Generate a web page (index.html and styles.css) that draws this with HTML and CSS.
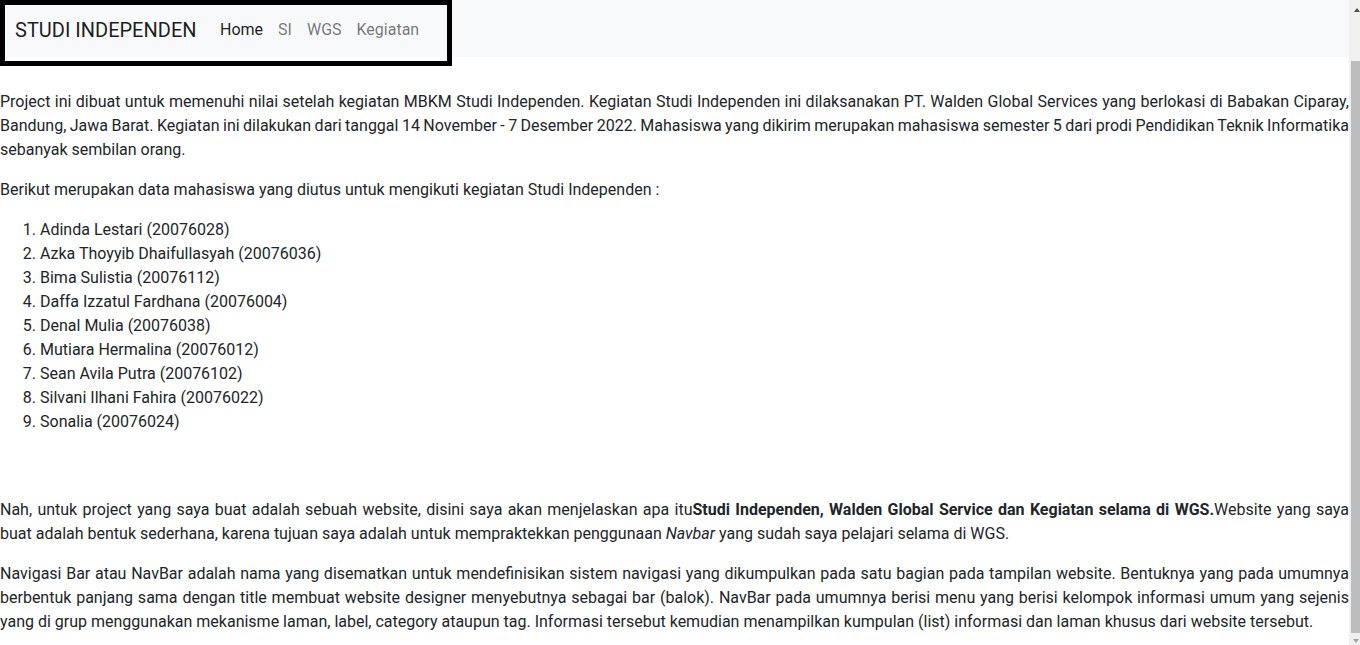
FILE: index.html
```html
<!DOCTYPE html>
<html lang="id">
<head>
<meta charset="utf-8">
<title>Studi Independen</title>
<link rel="stylesheet" href="styles.css">
</head>
<body>
<div class="app">
  <div class="screen">
    <nav class="navbar">
      <div class="navbox">
        <a class="brand" href="#">STUDI INDEPENDEN</a>
        <ul class="nav">
          <li><a class="nav-link active" href="#">Home</a></li>
          <li><a class="nav-link" href="#">SI</a></li>
          <li><a class="nav-link" href="#">WGS</a></li>
          <li><a class="nav-link" href="#">Kegiatan</a></li>
        </ul>
      </div>
    </nav>
    <main class="main">
      <p>
        <span class="ln">Project ini dibuat untuk memenuhi nilai setelah kegiatan MBKM Studi Independen. Kegiatan Studi Independen ini dilaksanakan PT. Walden Global Services yang berlokasi di Babakan Ciparay,</span>
        <span class="ln">Bandung, Jawa Barat. Kegiatan ini dilakukan dari tanggal 14 November - 7 Desember 2022. Mahasiswa yang dikirim merupakan mahasiswa semester 5 dari prodi Pendidikan Teknik Informatika</span>
        <span class="ln ln-last">sebanyak sembilan orang.</span>
      </p>
      <p>Berikut merupakan data mahasiswa yang diutus untuk mengikuti kegiatan Studi Independen :</p>
      <ol class="students">
        <li>Adinda Lestari (20076028)</li>
        <li>Azka Thoyyib Dhaifullasyah (20076036)</li>
        <li>Bima Sulistia (20076112)</li>
        <li>Daffa Izzatul Fardhana (20076004)</li>
        <li>Denal Mulia (20076038)</li>
        <li>Mutiara Hermalina (20076012)</li>
        <li>Sean Avila Putra (20076102)</li>
        <li>Silvani Ilhani Fahira (20076022)</li>
        <li>Sonalia (20076024)</li>
      </ol>
      <div class="spacer"></div>
      <p>
        <span class="ln">Nah, untuk project yang saya buat adalah sebuah website, disini saya akan menjelaskan apa itu<b>Studi Independen, Walden Global Service dan Kegiatan selama di WGS.</b>Website yang saya</span>
        <span class="ln ln-last">buat adalah bentuk sederhana, karena tujuan saya adalah untuk mempraktekkan penggunaan <i>Navbar</i> yang sudah saya pelajari selama di WGS.</span>
      </p>
      <p>
        <span class="ln">Navigasi Bar atau NavBar adalah nama yang disematkan untuk mendefinisikan sistem navigasi yang dikumpulkan pada satu bagian pada tampilan website. Bentuknya yang pada umumnya</span>
        <span class="ln">berbentuk panjang sama dengan title membuat website designer menyebutnya sebagai bar (balok). NavBar pada umumnya berisi menu yang berisi kelompok informasi umum yang sejenis</span>
        <span class="ln ln-last">yang di grup menggunakan mekanisme laman, label, category ataupun tag. Informasi tersebut kemudian menampilkan kumpulan (list) informasi dan laman khusus dari website tersebut.</span>
      </p>
    </main>
  </div>
  <div class="scrollbar" aria-hidden="true">
    <div class="sb-btn sb-up"><span class="arrow-up"></span></div>
    <div class="sb-track"><div class="sb-thumb"></div></div>
    <div class="sb-btn sb-down"><span class="arrow-down"></span></div>
  </div>
</div>
</body>
</html>
```
FILE: styles.css
```css
html, body {
  margin: 0;
  height: 100%;
  overflow: hidden;
}

body {
  font-family: Roboto, "Noto Sans", sans-serif;
  font-size: 16px;
  line-height: 24px;
  color: #212529;
  background: #fff;
}

.app {
  display: flex;
  height: 100vh;
}

.screen {
  flex: 1;
  min-width: 0;
  overflow: hidden;
}

/* scrollbar (partially visible at the right edge) */
.scrollbar {
  flex: none;
  width: 11px;
  display: flex;
  flex-direction: column;
  background: #f0f0f0;
  overflow: hidden;
}

.sb-btn {
  flex: none;
  display: flex;
  padding-left: 5px;
}

.sb-up {
  height: 17px;
  align-items: flex-start;
  padding-top: 8px;
  box-sizing: border-box;
}

.sb-down {
  height: 12px;
  align-items: flex-start;
  padding-top: 6px;
  padding-left: 4px;
  box-sizing: border-box;
}

.arrow-up {
  flex: none;
  width: 0;
  height: 0;
  border-left: 3.5px solid transparent;
  border-right: 3.5px solid transparent;
  border-bottom: 4px solid #505050;
}

.arrow-down {
  flex: none;
  width: 0;
  height: 0;
  border-left: 3.5px solid transparent;
  border-right: 3.5px solid transparent;
  border-top: 4px solid #a3a3a3;
}

.sb-track {
  flex: 1;
  display: flex;
  flex-direction: column;
  justify-content: flex-end;
}

.sb-thumb {
  height: 572px;
  margin-left: 2px;
  background: #bdbdbd;
}

/* navbar */
.navbar {
  height: 57px;
  background: #f8f9fa;
}

.navbox {
  box-sizing: border-box;
  width: 452px;
  height: 66px;
  border: 5px solid #000;
  display: flex;
  align-items: center;
  padding: 0 0 6px 10px;
  position: relative;
  z-index: 1;
}

.brand {
  font-size: 20px;
  line-height: 30px;
  color: rgba(0, 0, 0, 0.9);
  text-decoration: none;
  margin-right: 16px;
  white-space: nowrap;
}

.nav {
  display: flex;
  list-style: none;
  margin: 0;
  padding: 0;
}

.nav-link {
  display: block;
  padding: 0 7.5px;
  line-height: 24px;
  color: rgba(0, 0, 0, 0.55);
  text-decoration: none;
}

.nav-link.active {
  color: rgba(0, 0, 0, 0.9);
}

/* content */
.main {
  padding-top: 33px;
}

.main p {
  margin: 0 0 16px;
}

.ln {
  display: block;
  text-align: justify;
  text-align-last: justify;
  word-spacing: -3px;
}

.ln-last {
  text-align-last: auto;
  word-spacing: normal;
}

.students {
  margin: 0 0 16px;
  padding-left: 40px;
}

.spacer {
  height: 48px;
}
```
